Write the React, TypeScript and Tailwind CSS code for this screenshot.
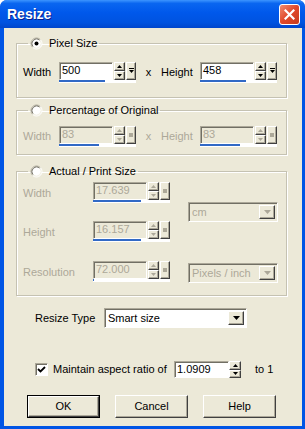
import React from 'react';

const raised =
  'bg-[#ECE9D8] border border-t-white border-l-white border-r-[#404040] border-b-[#404040] shadow-[inset_-1px_-1px_0_#ACA899]';
const sunken =
  'border border-t-[#ACA899] border-l-[#ACA899] border-r-white border-b-white shadow-[inset_1px_1px_0_#716F64]';

const Radio = ({ checked }: { checked?: boolean }) => (
  <svg width="13" height="13" viewBox="0 0 13 13" className="shrink-0">
    <circle cx="6.5" cy="6.5" r="5" fill="#fff" />
    <path d="M2.61 10.39 A5.5 5.5 0 0 1 10.39 2.61" stroke="#ACA899" fill="none" />
    <path d="M3.32 9.68 A4.5 4.5 0 0 1 9.68 3.32" stroke="#716F64" fill="none" />
    <path d="M10.39 2.61 A5.5 5.5 0 0 1 2.61 10.39" stroke="#fff" fill="none" />
    <path d="M9.68 3.32 A4.5 4.5 0 0 1 3.32 9.68" stroke="#F1EFE2" fill="none" />
    {checked && <circle cx="6.5" cy="6.5" r="2" fill="#000" />}
  </svg>
);

const Tri = ({ up, color }: { up?: boolean; color: string }) => (
  <svg width="5" height="3" viewBox="0 0 5 3">
    <path d={up ? 'M2.5 0 L5 3 L0 3 Z' : 'M0 0 L5 0 L2.5 3 Z'} fill={color} />
  </svg>
);

const SpinBox = ({
  value,
  disabled,
  fill,
}: {
  value: string;
  disabled?: boolean;
  fill: string;
}) => {
  const glyph = disabled ? '#ACA899' : '#000';
  return (
    <div className="flex flex-col w-[77px] shrink-0">
      <div className="flex h-[18px]">
        <div
          className={`flex-1 ${sunken} ${disabled ? 'bg-[#ECE9D8] text-[#ACA899]' : 'bg-white text-black'} pl-[2px] leading-[15px]`}
        >
          {value}
        </div>
        <div className="flex flex-col w-[11px] ml-[1px]">
          <div className={`flex-1 ${raised} flex items-center justify-center`}>
            <Tri up color={glyph} />
          </div>
          <div className={`flex-1 ${raised} flex items-center justify-center`}>
            <Tri color={glyph} />
          </div>
        </div>
        <div className={`w-[10px] ml-[1px] ${raised} flex items-center justify-center`}>
          {disabled ? (
            <div className="w-[4px] h-[4px] bg-[#ACA899]" />
          ) : (
            <svg width="5" height="6" viewBox="0 0 5 6">
              <path d="M0 0.5 H5" stroke="#000" />
              <path d="M0 2 L5 2 L2.5 5 Z" fill="#000" />
            </svg>
          )}
        </div>
      </div>
      <div className="h-[3px] bg-white">
        <div className="h-[2px] bg-[#3169C6]" style={{ width: fill }} />
      </div>
    </div>
  );
};

const Dropdown = ({
  value,
  disabled,
  width,
}: {
  value: string;
  disabled?: boolean;
  width: string;
}) => (
  <div
    className={`flex h-[20px] ${width} ${sunken} ${disabled ? 'bg-[#ECE9D8] text-[#ACA899]' : 'bg-white text-black'} p-[2px]`}
  >
    <div className="flex-1 pl-[1px] leading-[14px]">{value}</div>
    <div className={`w-[16px] ${raised} flex items-center justify-center`}>
      <svg width="7" height="4" viewBox="0 0 7 4">
        <path d="M0 0 L7 0 L3.5 4 Z" fill={disabled ? '#ACA899' : '#000'} />
      </svg>
    </div>
  </div>
);

const Group = ({
  label,
  checked,
  className,
  children,
}: {
  label: string;
  checked?: boolean;
  className: string;
  children: React.ReactNode;
}) => (
  <fieldset
    className={`border border-[#C5C2B2] shadow-[inset_1px_1px_0_#fff,1px_1px_0_#fff] px-[6px] ${className}`}
  >
    <legend className="ml-[5px] px-[2px] flex items-center gap-[6px] h-[14px] text-black">
      <Radio checked={checked} />
      <span>{label}</span>
    </legend>
    {children}
  </fieldset>
);

const Button = ({ label, def }: { label: string; def?: boolean }) => (
  <div className={`w-[73px] h-[23px] ${def ? 'border border-black' : ''}`}>
    <div
      className={`w-full h-full ${raised} flex items-center justify-center text-black`}
    >
      {label}
    </div>
  </div>
);

export default function App() {
  return (
    <div className="w-[305px] h-[429px] flex flex-col bg-[#0055E5] rounded-t-[7px] overflow-hidden font-['Liberation_Sans',Arial,sans-serif] text-[11px] select-none">
      <div className="h-[28px] shrink-0 flex items-center justify-between pl-[7px] pr-[5px] bg-[linear-gradient(to_bottom,#3D95FF_0%,#0A66F0_12%,#0058EB_45%,#0053E0_80%,#0046CC_100%)]">
        <span className="text-white font-bold text-[14px] [text-shadow:1px_1px_0_#0A1E8C]">Resize</span>
        <div className="w-[21px] h-[21px] rounded-[3px] border border-white bg-[linear-gradient(135deg,#F08C70_0%,#E0482A_50%,#C73C1E_100%)] flex items-center justify-center">
          <svg width="11" height="11" viewBox="0 0 11 11">
            <path d="M1.5 1.5 L9.5 9.5 M9.5 1.5 L1.5 9.5" stroke="#fff" strokeWidth="2.2" strokeLinecap="square" />
          </svg>
        </div>
      </div>

      <div className="flex-1 ml-[4px] mr-[3px] mb-[3px] bg-[#ECE9D8] pl-[12px] pr-[15px] pt-[8px] flex flex-col">
        <Group label="Pixel Size" checked className="pb-[14px]">
          <div className="flex items-center mt-[12px]">
            <span className="w-[36px]">Width</span>
            <SpinBox value="500" fill="46px" />
            <span className="w-[25px] text-center">x</span>
            <span className="w-[39px]">Height</span>
            <SpinBox value="458" fill="46px" />
          </div>
        </Group>

        <Group label="Percentage of Original" className="mt-[5px] pb-[7px]">
          <div className="flex items-center mt-[9px] text-[#ACA899]">
            <span className="w-[36px]">Width</span>
            <SpinBox value="83" fill="40px" disabled />
            <span className="w-[25px] text-center">x</span>
            <span className="w-[39px]">Height</span>
            <SpinBox value="83" fill="40px" disabled />
          </div>
        </Group>

        <Group label="Actual / Print Size" className="mt-[9px] pb-[12px]">
          <div className="grid grid-cols-[70px_77px_108px] gap-y-[18px] mt-[4px] text-[#ACA899] items-center">
            <span className="mt-[2px]">Width</span>
            <SpinBox value="17.639" fill="48px" disabled />
            <div className="row-span-2 self-center pl-[18px]">
              <Dropdown value="cm" disabled width="w-[90px]" />
            </div>
            <span className="mt-[2px]">Height</span>
            <SpinBox value="16.157" fill="48px" disabled />
            <span className="mt-[2px]">Resolution</span>
            <SpinBox value="72.000" fill="1px" disabled />
            <div className="mt-[3px] pl-[18px]">
              <Dropdown value="Pixels / inch" disabled width="w-[90px]" />
            </div>
          </div>
        </Group>

        <div className="flex items-center mt-[12px] pl-[19px]">
          <span className="w-[69px]">Resize Type</span>
          <Dropdown value="Smart size" width="w-[143px]" />
        </div>

        <div className="flex items-center mt-[33px] pl-[19px]">
          <div className={`w-[13px] h-[13px] bg-white ${sunken} flex items-center justify-center`}>
            <svg width="9" height="9" viewBox="0 0 9 9">
              <path d="M1 4 L3.5 6.5 L8 2" stroke="#000" strokeWidth="1.8" fill="none" />
            </svg>
          </div>
          <span className="ml-[5px] w-[121px]">Maintain aspect ratio of</span>
          <div className="flex h-[17px] w-[67px]">
            <div className={`flex-1 bg-white ${sunken} pl-[2px] leading-[14px]`}>1.0909</div>
            <div className="flex flex-col w-[12px]">
              <div className={`flex-1 ${raised} flex items-center justify-center`}>
                <Tri up color="#000" />
              </div>
              <div className={`flex-1 ${raised} flex items-center justify-center`}>
                <Tri color="#000" />
              </div>
            </div>
          </div>
          <span className="ml-[14px]">to 1</span>
        </div>

        <div className="flex gap-[15px] mt-[17px] pl-[11px]">
          <Button label="OK" def />
          <Button label="Cancel" />
          <Button label="Help" />
        </div>
      </div>
    </div>
  );
}
